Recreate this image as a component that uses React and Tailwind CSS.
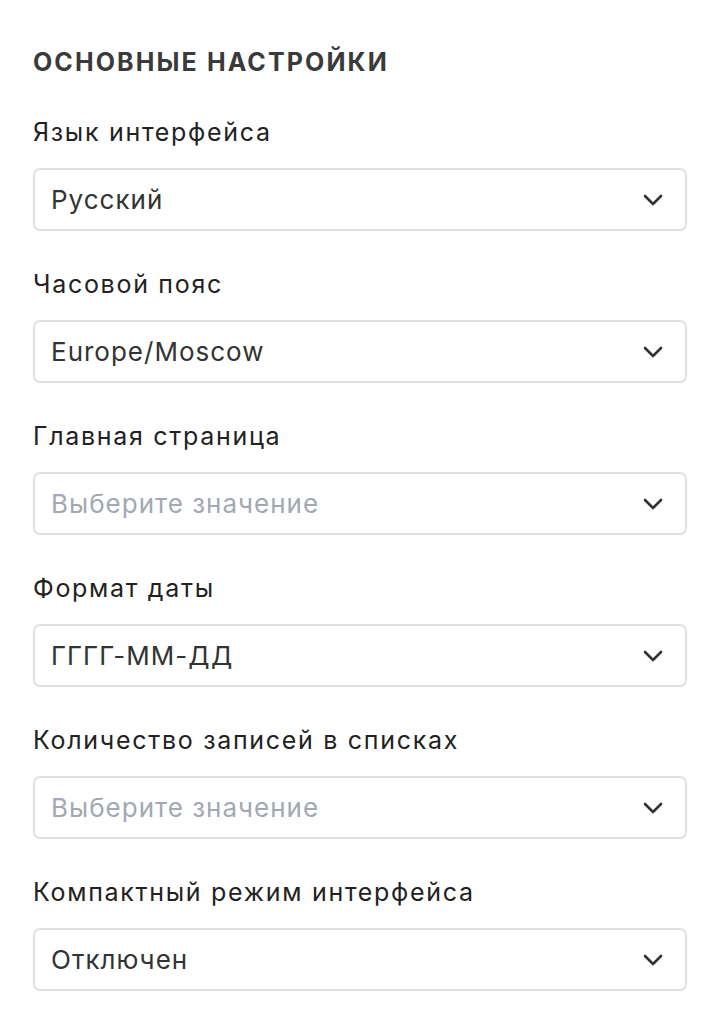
import React from 'react';

const fields = [
  { label: 'Язык интерфейса', value: 'Русский' },
  { label: 'Часовой пояс', value: 'Europe/Moscow' },
  { label: 'Главная страница', value: null },
  { label: 'Формат даты', value: 'ГГГГ-ММ-ДД' },
  { label: 'Количество записей в списках', value: null },
  { label: 'Компактный режим интерфейса', value: 'Отключен' },
];

function Chevron() {
  return (
    <svg width="20" height="12" viewBox="0 0 20 12" fill="none" className="shrink-0">
      <path d="M2 2l8 8 8-8" stroke="#333" strokeWidth="2.6" strokeLinecap="round" strokeLinejoin="round" />
    </svg>
  );
}

export default function App() {
  return (
    <div className="min-h-screen w-full bg-white font-['Inter','Noto_Sans',sans-serif] pl-[33px] pr-[22px] pt-[46px]">
      {/* заголовок */}
      <h2 className="text-[25px] leading-[32px] font-bold text-[#3a3a3a] tracking-[2.1px]">
        ОСНОВНЫЕ НАСТРОЙКИ
      </h2>

      <div className="mt-[38px] flex flex-col gap-[37px]">
        {fields.map((f) => (
          <div key={f.label} className="flex flex-col gap-[20px]">
            <label className="text-[25px] leading-[32px] text-[#222] tracking-[1.7px]">{f.label}</label>
            <div className="h-[63px] rounded-[7px] border-2 border-[#e0e0e0] bg-white flex items-center justify-between pl-[16px] pr-[22px]">
              <span
                className={
                  f.value
                    ? 'text-[26px] leading-[32px] tracking-[1px] text-[#333]'
                    : 'text-[26px] leading-[32px] tracking-[1px] text-[#a3a8b2]'
                }
              >
                {f.value || 'Выберите значение'}
              </span>
              <Chevron />
            </div>
          </div>
        ))}
      </div>
    </div>
  );
}
